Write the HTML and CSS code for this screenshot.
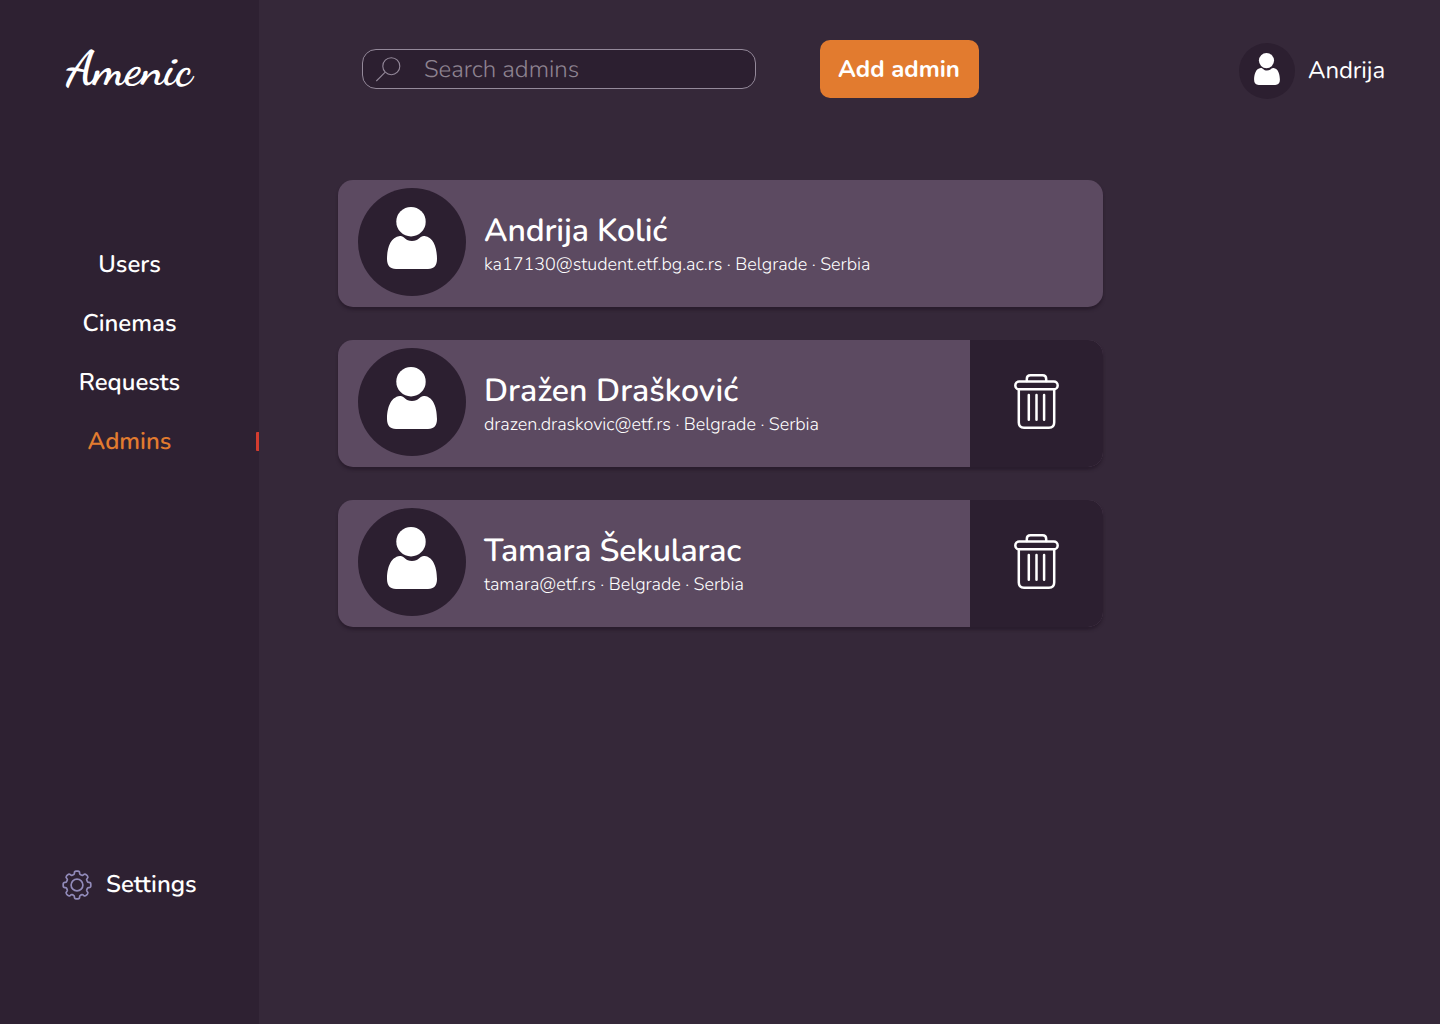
FILE: index.html
```html
<!DOCTYPE html>
<html lang="en">
<head>
<meta charset="utf-8">
<title>Amenic – Admins</title>
<link rel="stylesheet" href="styles.css">
</head>
<body>
<svg class="defs" aria-hidden="true">
  <symbol id="person" viewBox="0 0 50 62">
    <circle cx="24" cy="14.7" r="14.7"/>
    <path d="M13 29C17 28.5 18 34 25 34S33 28.5 37.500 29C47 30 50 42 50 52C50 58.500 47 62 41 62H9C3 62 0 58.500 0 52C0 42 3 30 13 29Z"/>
  </symbol>
  <symbol id="trash" viewBox="0 0 45 55">
    <g fill="none" stroke="#fff" stroke-width="2.5" stroke-linecap="round">
      <path d="M12.800 7V5Q12.800 1.300 16.500 1.300H28.500Q32.200 1.300 32.200 5V7"/>
      <rect x="1.300" y="7.600" width="42.400" height="7.600" rx="3.800"/>
      <path d="M4.800 15.500V48.500Q4.800 53.700 10 53.700H35Q40.200 53.700 40.200 48.500V15.500"/>
      <path d="M14.800 21V45.700M22.500 21V45.700M30.100 21V45.700"/>
    </g>
  </symbol>
</svg>
<div class="app">
  <aside class="sidebar">
    <div class="logo">Amenic</div>
    <nav class="menu">
      <a class="item">Users</a>
      <a class="item">Cinemas</a>
      <a class="item">Requests</a>
      <a class="item active">Admins</a>
    </nav>
    <a class="settings">
      <svg class="gear" viewBox="-15 -15 30 30" fill="none" stroke="#918ab9" stroke-width="1.700" stroke-linejoin="round">
        <circle r="5.900"/>
        <path d="M-3.2-10.500Q-2.600-10.700-2.600-12Q-2.600-13.800-1-13.800H1Q2.600-13.800 2.600-12Q2.600-10.700 3.200-10.500Q4.200-9.900 5.160-9.690Q5.600-9.300 6.600-10.300Q7.900-11.500 9.050-10.460L10.460-9.050Q11.500-7.900 10.300-6.600Q9.300-5.600 9.690-5.160Q9.900-4.200 10.500-3.200Q10.700-2.600 12-2.600Q13.800-2.600 13.800-1V1Q13.800 2.600 12 2.600Q10.700 2.600 10.500 3.200Q9.900 4.200 9.690 5.160Q9.300 5.600 10.300 6.600Q11.500 7.900 10.460 9.050L9.050 10.460Q7.900 11.500 6.600 10.300Q5.600 9.300 5.160 9.690Q4.200 9.900 3.200 10.500Q2.600 10.700 2.600 12Q2.600 13.800 1 13.800H-1Q-2.600 13.800-2.600 12Q-2.600 10.700-3.200 10.500Q-4.200 9.900-5.160 9.690Q-5.600 9.300-6.600 10.300Q-7.900 11.500-9.050 10.460L-10.460 9.050Q-11.500 7.900-10.300 6.600Q-9.300 5.600-9.690 5.160Q-9.900 4.200-10.500 3.200Q-10.700 2.600-12 2.600Q-13.800 2.600-13.800 1V-1Q-13.800-2.600-12-2.600Q-10.700-2.600-10.500-3.200Q-9.900-4.200-9.690-5.160Q-9.300-5.600-10.300-6.600Q-11.500-7.900-10.460-9.050L-9.050-10.460Q-7.900-11.500-6.600-10.300Q-5.600-9.300-5.160-9.690Q-4.200-9.900-3.200-10.500Z"/>
      </svg>
      <span>Settings</span>
    </a>
  </aside>
  <main class="content">
    <header class="topbar">
      <div class="search">
        <svg class="lens" viewBox="0 0 25 25" fill="none" stroke="#94899a" stroke-width="1.100"><circle cx="15.300" cy="9.200" r="8.500"/><path d="M9 15.300L.300 24"/></svg>
        <span>Search admins</span>
      </div>
      <button class="add">Add admin</button>
      <div class="account">
        <div class="avatar small"><svg><use href="#person"/></svg></div>
        <span>Andrija</span>
      </div>
    </header>
    <section class="list">
      <article class="card">
        <div class="avatar"><svg><use href="#person"/></svg></div>
        <div class="info">
          <h2>Andrija Kolić</h2>
          <p>ka17130@student.etf.bg.ac.rs · Belgrade · Serbia</p>
        </div>
      </article>
      <article class="card">
        <div class="avatar"><svg><use href="#person"/></svg></div>
        <div class="info">
          <h2 class="wide">Dražen Drašković</h2>
          <p>drazen.draskovic@etf.rs · Belgrade · Serbia</p>
        </div>
        <div class="delete"><svg><use href="#trash"/></svg></div>
      </article>
      <article class="card">
        <div class="avatar"><svg><use href="#person"/></svg></div>
        <div class="info">
          <h2>Tamara Šekularac</h2>
          <p>tamara@etf.rs · Belgrade · Serbia</p>
        </div>
        <div class="delete"><svg><use href="#trash"/></svg></div>
      </article>
    </section>
  </main>
</div>
</body>
</html>
```
FILE: styles.css
```css
* { box-sizing: border-box; }
body { margin: 0; background: #352839; color: #fff; font-family: Nunito, Lato, sans-serif; font-size: 24px; line-height: 33px; text-rendering: geometricPrecision; }
.defs { position: absolute; width: 0; height: 0; }
.app { display: flex; height: 1024px; }

.sidebar { width: 259px; background: #2e2132; display: flex; flex-direction: column; }
.logo { height: 60px; margin-top: 40px; padding-left: 66px; font: 700 48px/60px "Dancing Script", "Liberation Serif", cursive; white-space: nowrap; }
.menu { margin-top: 149px; display: flex; flex-direction: column; gap: 26px; }
.item { display: flex; justify-content: center; position: relative; font-weight: 570; }
.active { color: #e27b2f; }
.active::after { content: ""; position: absolute; right: 0; top: 6px; width: 3px; height: 19px; border-radius: 1px 0 0 1px; background: #d43c2f; }
.settings { margin-top: 410px; padding-left: 61px; display: flex; align-items: center; gap: 15px; font-weight: 570; }
.gear { width: 30px; height: 30px; margin: -1px -.5px 0 .5px; }

.content { flex: 1; }
.topbar { height: 140px; padding: 0 55px 0 103px; display: flex; align-items: center; }
.search { width: 394px; height: 40px; margin-top: -2px; padding-left: 13px; border: 1px solid #94899a; border-radius: 14px; background: #2c1f30; display: flex; align-items: center; gap: 23px; color: #8e8390; font-weight: 300; }
.search span { padding-top: 2px; }
.lens { width: 25px; height: 25px; }
.add { width: 159px; height: 58px; margin: -2px 0 0 64px; padding: 0 1px 0 0; border: 0; border-radius: 10px; background: #e27b2f; color: #fff; font: inherit; font-weight: 700; }
.account { margin-left: auto; margin-top: 2px; display: flex; align-items: center; gap: 13px; }
.account span { letter-spacing: -.1px; }

.avatar { width: 108px; height: 108px; flex: none; padding: 19px 0 0 29px; border-radius: 50%; background: #2c1f30; fill: #fff; }
.avatar svg { display: block; width: 50px; height: 62px; }
.small { width: 56px; height: 56px; padding: 10px 0 0 15px; }
.small svg { width: 26px; height: 32px; }

.list { width: 765px; margin: 40px 0 0 79px; display: flex; flex-direction: column; gap: 33px; }
.card { height: 127px; display: flex; padding: 8px 0 0 20px; border-radius: 15px; background: #5c4a61; box-shadow: 0 3px 3px rgba(35, 23, 39, .65); }
.info { padding: 22px 0 0 18px; white-space: nowrap; }
.info h2 { margin: 0; font-size: 32px; font-weight: 600; line-height: 44px; letter-spacing: -.14px; }
.info h2.wide { letter-spacing: .05px; }
.info p { margin: -1px 0 0; font-size: 18px; font-weight: 300; line-height: 24px; letter-spacing: -.03px; }
.delete { width: 133px; height: 127px; margin: -8px 0 0 auto; border-radius: 0 15px 15px 0; background: #2c1f30; padding: 34px 0 0 44px; }
.delete svg { display: block; width: 45px; height: 55px; }
```
